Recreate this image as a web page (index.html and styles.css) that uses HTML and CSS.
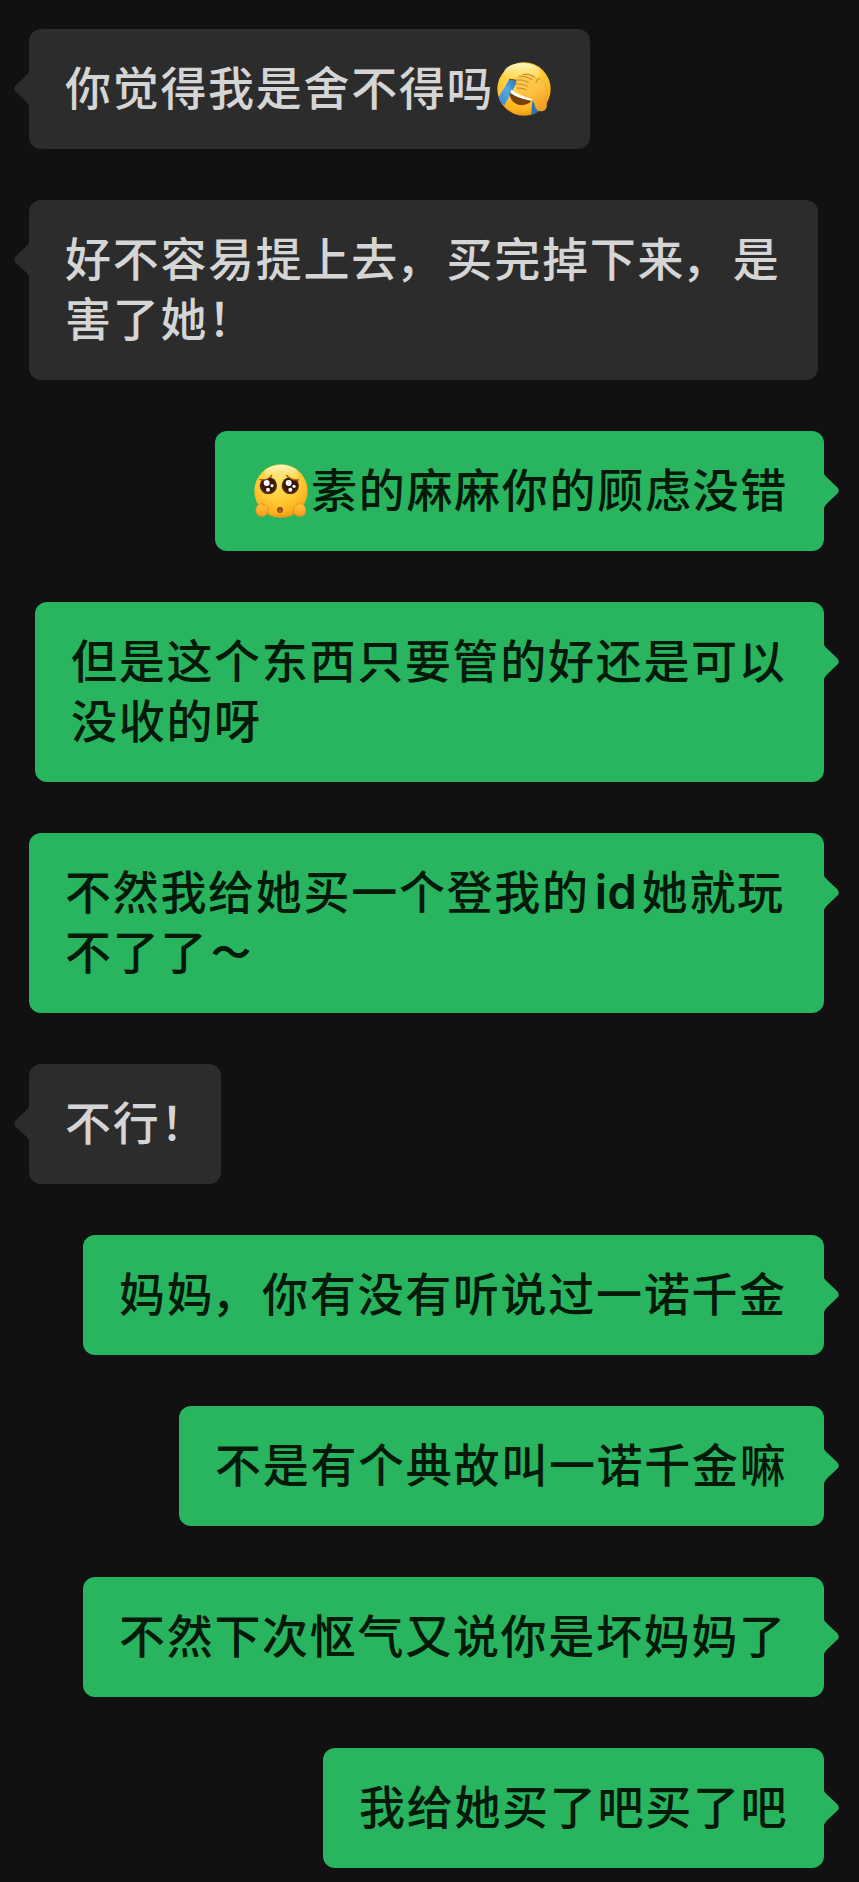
FILE: index.html
```html
<!DOCTYPE html>
<html lang="zh-CN">
<head>
<meta charset="utf-8">
<title>聊天</title>
<link rel="stylesheet" href="styles.css">
</head>
<body>
<main class="chat">
  <div class="bubble received w-emoji">你觉得我是舍不得吗<svg class="emoji" viewBox="0 0 162 162" aria-label="捂脸笑哭">
    <defs>
      <radialGradient id="face" cx=".45" cy=".3" r=".75"><stop offset="0" stop-color="#ffe264"/><stop offset=".45" stop-color="#ffcf3c"/><stop offset=".8" stop-color="#fdb31f"/><stop offset="1" stop-color="#e88b0c"/></radialGradient>
      <linearGradient id="shine" x1="0" y1="0" x2="0" y2="1"><stop offset="0" stop-color="#fff9c9"/><stop offset="1" stop-color="#ffe06a" stop-opacity="0"/></linearGradient>
      <linearGradient id="tear" x1="1" y1="0" x2="0" y2="1"><stop offset="0" stop-color="#2d6eaf"/><stop offset=".45" stop-color="#59a9e8"/><stop offset="1" stop-color="#2d82cc"/></linearGradient>
      <linearGradient id="hand" x1="0" y1="0" x2=".6" y2="1"><stop offset="0" stop-color="#ffd257"/><stop offset=".6" stop-color="#fcc03e"/><stop offset="1" stop-color="#f3a126"/></linearGradient>
      <clipPath id="disc"><circle cx="81" cy="81" r="80"/></clipPath>
    </defs>
    <circle cx="81" cy="81" r="80" fill="url(#face)"/>
    <ellipse cx="75" cy="32" rx="54" ry="28" fill="url(#shine)"/>
    <g clip-path="url(#disc)">
      <path d="M36 53 60 55Q56 70 48 84L22 130 0 114Z" fill="url(#tear)"/>
      <path d="M106 116 130 142 122 164H102Z" fill="#2b72bb"/>
    </g>
    <path d="M37 91Q40 128 76 130Q98 128 105 112Z" fill="#79420b"/>
    <path d="M43 83Q66 102 108 110L104 116Q64 110 40 93Z" fill="#fff"/>
    <path d="M36 52Q48 51 60 56" fill="none" stroke="#754415" stroke-width="3"/>
    <path d="M57 55Q56 49 64 43Q80 32 102 39Q114 43 120 51Q136 49 144 64Q154 84 151 107Q149 116 149 128Q149 145 135 147Q118 149 114 132Q113 119 105 111Q80 101 70 89Q57 83 58 75Q52 66 61 65Z" fill="url(#hand)" stroke="#e39c28" stroke-width="1.5"/>
    <g fill="none" stroke="#b26b17" stroke-width="2.2" stroke-linecap="round">
      <path d="M57 54Q75 50 94 61M68 45Q83 39 105 53M59 66Q76 65 91 72M61 78Q75 77 87 83M78 37Q97 33 112 44M117 61Q119 52 127 49"/>
    </g>
  </svg></div>

  <div class="bubble received w-wide">好不容易提上去<span class="comma">，</span>买完掉下来<span class="comma">，</span>是<br>害了她！</div>

  <div class="bubble sent w-plead"><svg class="emoji" viewBox="0 0 162 162" aria-label="可怜">
    <defs>
      <radialGradient id="eye" cx=".5" cy=".45" r=".6"><stop offset="0" stop-color="#2a1006"/><stop offset=".65" stop-color="#3c1b0a"/><stop offset="1" stop-color="#79451b"/></radialGradient>
      <linearGradient id="fist" x1="0" y1="0" x2="0" y2="1"><stop offset="0" stop-color="#ffc83d"/><stop offset="1" stop-color="#f39b20"/></linearGradient>
    </defs>
    <circle cx="81" cy="81" r="80" fill="url(#face)"/>
    <ellipse cx="81" cy="30" rx="52" ry="27" fill="url(#shine)"/>
    <circle cx="43" cy="65" r="26" fill="url(#eye)"/>
    <circle cx="109" cy="65" r="26" fill="url(#eye)"/>
    <g fill="#fff">
      <circle cx="38" cy="57" r="9"/><circle cx="54" cy="65" r="5"/><circle cx="42" cy="77" r="6"/>
      <circle cx="104" cy="57" r="9"/><circle cx="120" cy="67" r="5"/><circle cx="109" cy="77" r="6"/>
    </g>
    <path d="M18 47Q43 50 53 34L50 32Q34 36 18 47ZM98 34Q109 49 134 48Q119 34 101 32Z" fill="#ffd84f"/>
    <path d="M18 47Q43 50 53 34M98 34Q109 49 134 48" fill="none" stroke="#945412" stroke-width="4" stroke-linecap="round"/>
    <ellipse cx="78" cy="138" rx="9" ry="9" fill="#8b4614"/>
    <ellipse cx="78" cy="141" rx="5" ry="5" fill="#b5622c"/>
    <g fill="url(#fist)" stroke="#d98212" stroke-width="2">
      <path d="M15 121Q24 115 33 124Q43 126 42 134Q44 153 29 157Q12 159 7 148Q1 130 15 121Z"/>
      <path d="M146 121Q137 115 128 124Q117 126 118 134Q116 153 132 157Q149 159 154 148Q160 130 146 121Z"/>
    </g>
  </svg>素的麻麻你的顾虑没错</div>

  <div class="bubble sent w-wide">但是这个东西只要管的好还是可以<br>没收的呀</div>

  <div class="bubble sent w-full">不然我给她买一个登我的<span class="latin">id</span>她就玩<br>不了了<span class="wave">～</span></div>

  <div class="bubble received w-short">不行！</div>

  <div class="bubble sent w-fourteen">妈妈<span class="comma">，</span>你有没有听说过一诺千金</div>

  <div class="bubble sent w-twelve">不是有个典故叫一诺千金嘛</div>

  <div class="bubble sent w-fourteen">不然下次怄气又说你是坏妈妈了</div>

  <div class="bubble sent w-eight">我给她买了吧买了吧</div>
</main>
</body>
</html>
```

FILE: styles.css
```css
* {
  box-sizing: border-box;
}

body {
  margin: 0;
  background: #111;
}

.chat {
  display: flex;
  flex-direction: column;
  gap: 51px;
  height: 1882px;
  padding: 29px 35px 0 29px;
  overflow: hidden;
  font-family: "Noto Sans CJK SC", sans-serif;
  font-size: 46px;
  font-weight: 500;
  line-height: 60px;
  letter-spacing: 1.7px;
}

.bubble {
  position: relative;
  flex: none;
  padding: 26px 0 34px 36px;
  border-radius: 12px;
  white-space: nowrap;
}

.bubble::before {
  content: "";
  position: absolute;
  top: 42px;
  width: 16px;
  height: 36px;
  background: inherit;
}

.received {
  align-self: flex-start;
  background: #2c2c2c;
  color: #d5d5d5;
}

.received::before {
  left: -15px;
  clip-path: path("M16 0 L15 1 Q14 3 11 5.5 L1.5 14.5 Q-1 18 1.5 20.5 L11 29.5 Q14 32 15 35 L16 36 Z");
}

.sent {
  align-self: flex-end;
  background: #29b560;
  color: #03190a;
}

.sent::before {
  right: -15px;
  clip-path: path("M0 0 L1 1 Q2 3 5 5.5 L14.5 14.5 Q17 18 14.5 20.5 L5 29.5 Q2 32 1 35 L0 36 Z");
}

.w-emoji { width: 561px; height: 120px; }
.w-wide { width: 789px; }
.w-plead { width: 609px; height: 120px; }
.w-full { width: 795px; height: 180px; }
.w-short { width: 192px; }
.w-fourteen { width: 741px; }
.w-twelve { width: 645px; }
.w-eight { width: 501px; }

.emoji {
  width: 54px;
  height: 54px;
  margin: 0 3px;
  vertical-align: -11px;
}

.comma {
  margin: 0 3px 0 -3px;
}

.wave {
  margin-left: 3px;
  font-size: 40px;
  font-weight: 700;
  line-height: 1;
  vertical-align: 2px;
}

.latin {
  display: inline-block;
  width: 52px;
  padding-left: 5px;
  font-family: Inter, sans-serif;
  font-size: 47.5px;
  font-weight: 600;
  letter-spacing: 0;
  line-height: 50px;
}
```
